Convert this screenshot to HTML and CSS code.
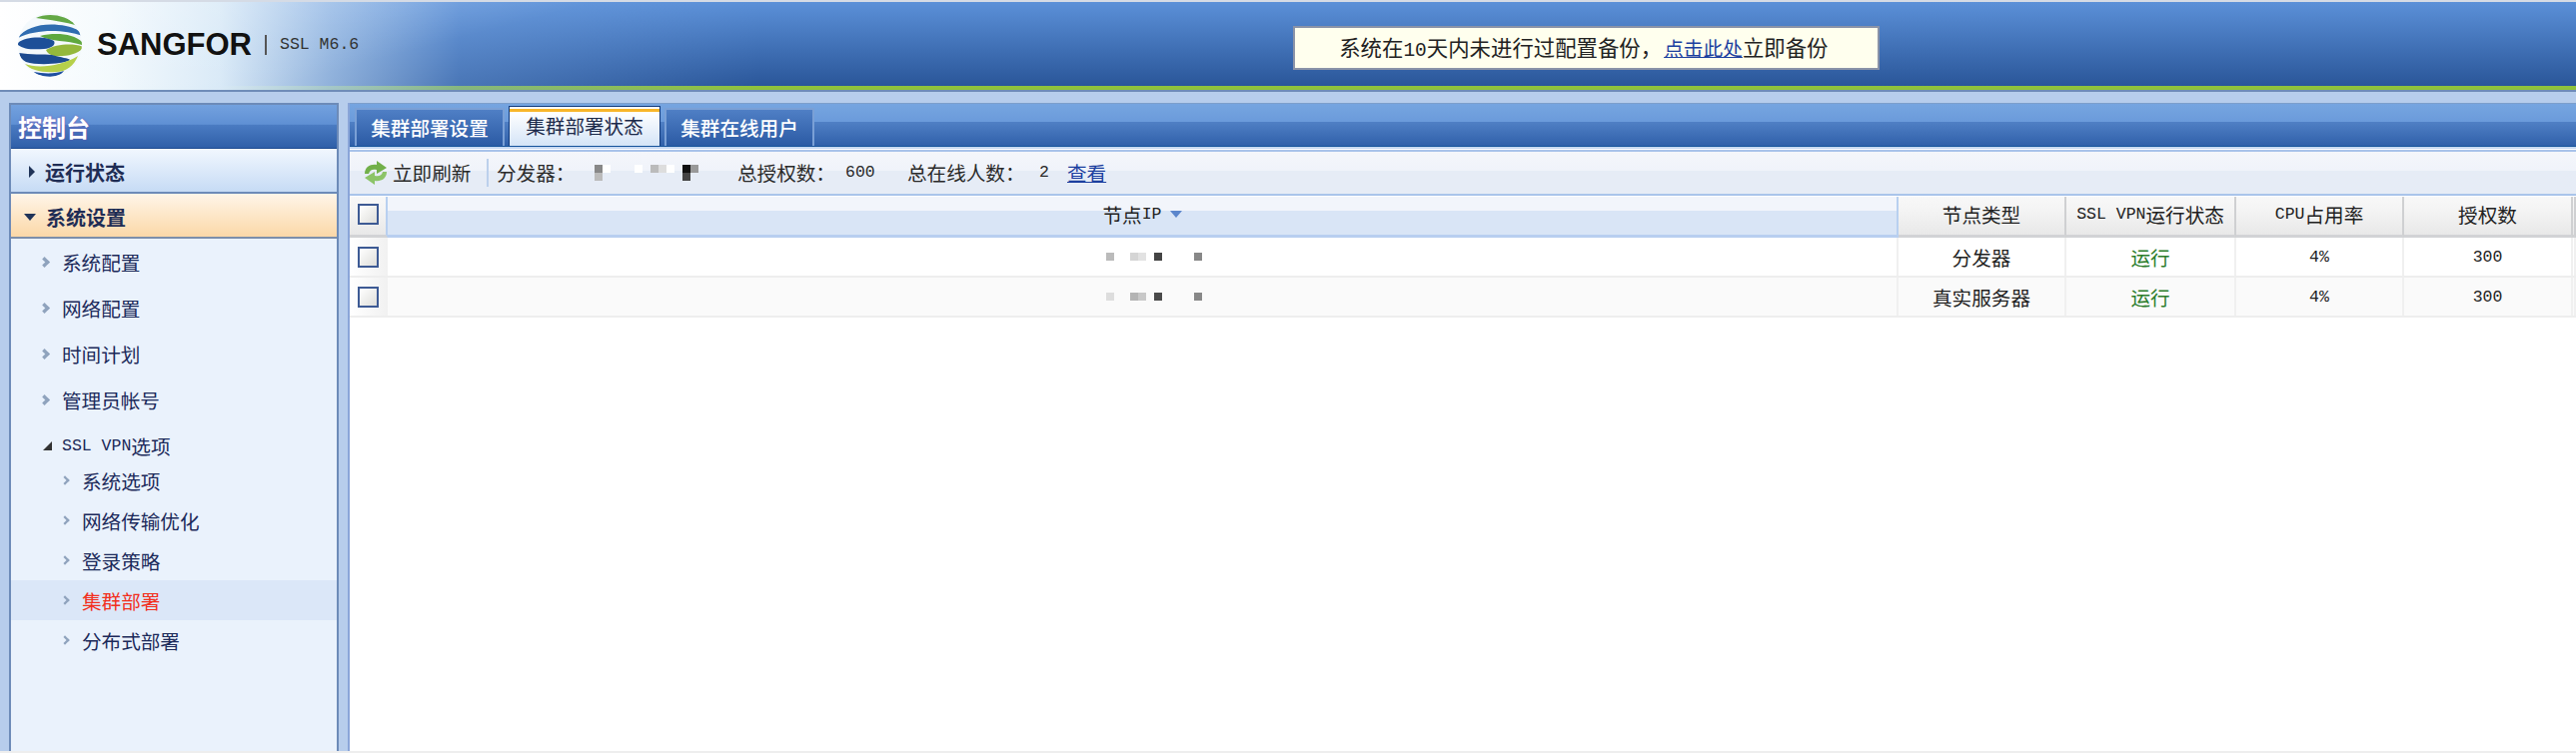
FILE: index.html
```html
<!DOCTYPE html>
<html lang="zh-CN">
<head>
<meta charset="utf-8">
<title>SANGFOR SSL M6.6</title>
<link rel="stylesheet" href="styles.css">
</head>
<body>
<div class="page">
  <header class="top">
    <div class="brand">
      <svg class="logo" width="70" height="66" viewBox="0 0 70 66">
        <defs><clipPath id="globe"><circle cx="34" cy="33" r="32"/></clipPath></defs>
        <g clip-path="url(#globe)">
          <rect width="70" height="66" fill="#f4f9fc"/>
          <path d="M20 6C30 1 48 1 62 14C50 10 34 8 20 6Z" fill="#63a845"/>
          <path d="M2 26C10 14 30 10 50 14C60 16 64 19 67 24C50 18 22 16 2 26Z" fill="#2f6cb0"/>
          <path d="M24 24C40 20 58 22 66 30L66 33C50 28 36 30 24 24Z" fill="#5fa83e"/>
          <path d="M1 32C8 24 30 24 38 29C40 33 36 36 28 37C16 38 6 37 1 32Z" fill="#1d4f98"/>
          <path d="M30 38C40 32 58 31 67 35C64 42 50 45 38 44C34 43 31 41 30 38Z" fill="#94b83c"/>
          <path d="M3 41C14 43 28 42 36 43C46 46 52 46 54 48C48 52 22 54 10 50C6 48 4 45 3 41Z" fill="#1c4a90"/>
          <path d="M9 52C22 57 46 54 62 44C58 54 50 60 40 60C26 61 14 58 9 52Z" fill="#b6d04a"/>
          <path d="M18 60C28 62 40 62 48 59C44 66 24 67 18 60Z" fill="#1f4fa0"/>
        </g>
      </svg>
      <span class="brand-name">SANGFOR</span>
      <span class="brand-ver">SSL M6.6</span>
    </div>
    <div class="notice">系统在<span class="en">10</span>天内未进行过配置备份，<a class="notice-link" href="#">点击此处</a><span class="notice-end">立即备份</span></div>
  </header>

  <div class="body">
    <aside class="side">
      <h1 class="side-title">控制台</h1>
      <div class="side-group"><span class="arrow-right"></span>运行状态</div>
      <div class="side-group open"><span class="arrow-down"></span>系统设置</div>
      <ul class="menu">
        <li class="menu-item"><span class="chev"></span>系统配置</li>
        <li class="menu-item"><span class="chev"></span>网络配置</li>
        <li class="menu-item"><span class="chev"></span>时间计划</li>
        <li class="menu-item"><span class="chev"></span>管理员帐号</li>
        <li class="menu-folder"><span class="corner"></span><span class="en">SSL VPN</span>选项</li>
        <li class="menu-sub"><span class="chev small"></span>系统选项</li>
        <li class="menu-sub"><span class="chev small"></span>网络传输优化</li>
        <li class="menu-sub"><span class="chev small"></span>登录策略</li>
        <li class="menu-sub active"><span class="chev small"></span>集群部署</li>
        <li class="menu-sub"><span class="chev small"></span>分布式部署</li>
      </ul>
    </aside>

    <main class="main">
      <nav class="tabs">
        <a class="tab">集群部署设置</a>
        <a class="tab current">集群部署状态</a>
        <a class="tab">集群在线用户</a>
      </nav>
      <div class="toolbar">
        <svg class="refresh" width="24" height="26" viewBox="0 0 24 26">
          <path d="M1 14C1 7 7 4 13 5L13 1L23 8L13 14L13 10C9 9 6 10 5 14Z" fill="#72b04a"/>
          <path d="M23 12C23 19 17 22 11 21L11 25L1 18L11 12L11 16C15 17 18 16 19 12Z" fill="#8cc468"/>
        </svg>
        <span class="tool-refresh">立即刷新</span>
        <span class="tool-sep"></span>
        <span class="tool-dispatch">分发器：</span>
        <svg class="mosaic-top" width="104" height="16" viewBox="0 0 104 16">
          <rect x="0" y="0" width="8" height="8" fill="#888"/><rect x="0" y="8" width="8" height="8" fill="#bbb"/>
          <rect x="8" y="0" width="8" height="8" fill="#fff"/><rect x="40" y="0" width="8" height="8" fill="#fff"/>
          <rect x="56" y="0" width="8" height="8" fill="#bbb"/><rect x="64" y="0" width="8" height="8" fill="#ddd"/>
          <rect x="72" y="0" width="8" height="8" fill="#fff"/><rect x="88" y="0" width="8" height="8" fill="#111"/>
          <rect x="88" y="8" width="8" height="8" fill="#444"/><rect x="96" y="0" width="8" height="8" fill="#999"/>
        </svg>
        <span class="tool-total">总授权数：</span>
        <span class="en tool-total-val">600</span>
        <span class="tool-online">总在线人数：</span>
        <span class="en tool-online-val">2</span>
        <a class="tool-link" href="#">查看</a>
      </div>
      <div class="grid">
        <div class="row head">
          <div class="cell check"><span class="box"></span></div>
          <div class="cell ip sorted">节点<span class="en">IP</span><span class="sort"></span></div>
          <div class="cell">节点类型</div>
          <div class="cell"><span class="en">SSL VPN</span>运行状态</div>
          <div class="cell"><span class="en">CPU</span>占用率</div>
          <div class="cell">授权数</div>
          <div class="cell"></div>
        </div>
        <div class="row">
          <div class="cell check"><span class="box"></span></div>
          <div class="cell ip">
            <svg class="mask" width="96" height="8" viewBox="0 0 96 8"><rect x="0" width="8" height="8" fill="#bbb"/><rect x="24" width="8" height="8" fill="#d5d5d5"/><rect x="32" width="8" height="8" fill="#e2e2e2"/><rect x="48" width="8" height="8" fill="#444"/><rect x="88" width="8" height="8" fill="#888"/></svg>
          </div>
          <div class="cell">分发器</div>
          <div class="cell run">运行</div>
          <div class="cell en-cell">4%</div>
          <div class="cell en-cell">300</div>
          <div class="cell"></div>
        </div>
        <div class="row alt">
          <div class="cell check"><span class="box"></span></div>
          <div class="cell ip">
            <svg class="mask" width="96" height="8" viewBox="0 0 96 8"><rect x="0" width="8" height="8" fill="#ddd"/><rect x="24" width="8" height="8" fill="#b4b4b4"/><rect x="32" width="8" height="8" fill="#c8c8c8"/><rect x="48" width="8" height="8" fill="#4a4a4a"/><rect x="88" width="8" height="8" fill="#888"/></svg>
          </div>
          <div class="cell">真实服务器</div>
          <div class="cell run">运行</div>
          <div class="cell en-cell">4%</div>
          <div class="cell en-cell">300</div>
          <div class="cell"></div>
        </div>
      </div>
    </main>
  </div>
</div>
</body>
</html>
```
FILE: styles.css
```css
* { box-sizing: border-box; }
html, body { margin: 0; height: 100%; }
body {
  font-family: "Noto Sans CJK SC", "Liberation Sans", sans-serif;
  font-size: 19.6px;
  color: #222;
  background: #eeeeee;
  overflow: hidden;
}
a { text-decoration: none; }
.en { font-family: "Liberation Mono", monospace; font-size: 16.5px; }

.page { height: 752px; display: flex; flex-direction: column; background: #b7cdec; }

/* top banner */
.top {
  height: 92px;
  flex: none;
  display: flex;
  align-items: flex-start;
  border-top: 2px solid #d5dbe5;
  border-bottom: 2px solid #6f8cb8;
  background:
    linear-gradient(180deg, transparent 0, transparent 84px, #8fc23c 84px, #8fc23c 88px),
    linear-gradient(180deg, #5b90d8 0, #2a5699 84px);
  position: relative;
}
.top::before {
  content: "";
  position: absolute;
  inset: 0 auto 0 0;
  width: 760px;
  background:
    linear-gradient(165deg, rgba(255,255,255,.3) 0, rgba(255,255,255,0) 55%),
    linear-gradient(90deg, #fff 0, #f2f9fd 110px, #d8e9f7 220px, rgba(170,200,235,.8) 330px, rgba(120,165,225,.4) 460px, rgba(90,140,215,0) 760px);
}
.brand { position: relative; display: flex; align-items: center; height: 86px; padding-left: 16px; }
.logo { flex: none; margin-top: 0; }
.brand-name {
  font-family: "Liberation Sans", sans-serif;
  font-weight: 700;
  font-size: 31px;
  color: #111;
  margin-left: 11px;
  width: 168px;
}
.brand-ver {
  font-family: "Liberation Mono", monospace;
  font-size: 16.5px;
  color: #333;
  border-left: 2px solid #555;
  padding-left: 13px;
  line-height: 20px;
}
.notice {
  position: relative;
  margin-left: 935px;
  margin-top: 24px;
  width: 587px;
  height: 44px;
  border: 2px solid #8a93a8;
  background: #ffffee;
  color: #222;
  font-size: 21.4px;
  line-height: 38px;
  padding-left: 44px;
  white-space: nowrap;
}
.notice .en { font-size: 19.5px; }
.notice-link { color: #1c3f9f; text-decoration: underline; font-size: 19.7px; margin-left: 2px; }
.notice-end { font-size: 21.4px; }

/* body */
.body { flex: 1; display: flex; padding: 11px 0 0 9px; min-height: 0; }

/* sidebar */
.side {
  width: 330px;
  flex: none;
  border-left: 2px solid #6d8bb8;
  border-right: 2px solid #6d8bb8;
  background: #eaf2fc;
}
.side-title {
  margin: 0;
  height: 46px;
  font-size: 24px;
  font-weight: 700;
  line-height: 44px;
  padding-left: 7px;
  color: #fff;
  text-shadow: 0 0 2px #7a4fb0;
  border-top: 2px solid #6d8bb8;
  border-bottom: 1px solid #1c4a90;
  background: linear-gradient(180deg, #73a1de 0, #5f90d4 45%, #4a7bc2 47%, #2f5fa8 100%);
}
.side-group {
  height: 45px;
  display: flex;
  align-items: center;
  padding-top: 3px;
  font-weight: 700;
  font-size: 20px;
  color: #1f2d55;
  border-bottom: 2px solid #6d8bb8;
  background: linear-gradient(180deg, #f1f7fe 0, #c6dbf5 100%);
}
.side-group.open { background: linear-gradient(180deg, #fff5e8 0, #fbd8a8 100%); border-bottom-color: #7d8faa; }
.arrow-right {
  width: 0; height: 0;
  margin: 0 10px 0 18px;
  border-left: 6px solid #1f3358;
  border-top: 6px solid transparent;
  border-bottom: 6px solid transparent;
}
.arrow-down {
  width: 0; height: 0;
  margin: 0 10px 0 13px;
  border-top: 7px solid #1f3358;
  border-left: 6px solid transparent;
  border-right: 6px solid transparent;
}
.menu { list-style: none; margin: 0; padding: 0; color: #1c2a5a; }
.menu-item { height: 46px; display: flex; align-items: center; padding-left: 30px; }
.menu-folder { height: 38px; padding: 8px 0 0 32px; display: flex; align-items: center; }
.menu-sub { height: 40px; display: flex; align-items: center; padding-left: 51px; }
.menu-sub.active { color: #f2301e; background: #dbe7f8; }
.chev {
  width: 7px; height: 7px;
  flex: none;
  margin-right: 14px;
  border-top: 3px solid #8fa3bd;
  border-right: 3px solid #8fa3bd;
  transform: rotate(45deg) scale(1.1);
}
.chev.small { width: 6px; height: 6px; border-width: 2px; margin-right: 14px; }
.corner {
  width: 0; height: 0;
  flex: none;
  margin-right: 10px;
  border-bottom: 9px solid #333;
  border-left: 9px solid transparent;
}

/* main panel */
.main {
  flex: 1;
  min-width: 0;
  margin-left: 9px;
  border-left: 2px solid #8aa5d8;
  background: #fff;
  display: flex;
  flex-direction: column;
}
.tabs {
  height: 44px;
  flex: none;
  display: flex;
  align-items: flex-end;
  gap: 4px;
  padding-left: 5px;
  border-top: 1px solid #7d9fcc;
  border-bottom: 1px solid #15539b;
  background: linear-gradient(180deg, #76a5e0 0, #6b9bdb 42%, #4f7fc4 44%, #3060aa 100%);
}
.tab {
  width: 150px;
  height: 38px;
  text-align: center;
  line-height: 36px;
  font-weight: 500;
  color: #fff;
  border: 2px solid #7aa0d6;
  border-bottom: 0;
  background: linear-gradient(180deg, #4f7fc5 0, #2b5aa4 100%);
}
.tab.current {
  height: 40px;
  width: 152px;
  font-weight: 400;
  color: #1c2a4a;
  border: 1px solid #123a7c;
  border-bottom: 0;
  padding-top: 1px;
  background: linear-gradient(180deg, #fff 0, #fff 2px, #f8b62a 2px, #f8b62a 5px, #fff 5px, #d4e4f7 100%);
}
.toolbar {
  height: 49px;
  flex: none;
  display: flex;
  align-items: center;
  padding: 4px 0 0 14px;
  white-space: nowrap;
  color: #2a2a2a;
  border-bottom: 2px solid #a9c4ea;
  background:
    linear-gradient(180deg, #c6d8f2 0, #c6d8f2 2px, #fff 2px, #fff 3px, #a9c3ea 3px, #a9c3ea 5px, transparent 5px),
    linear-gradient(180deg, #f5f7fb 0, #f0f3fa 50%, #e6ecf6 52%, #e6ecf6 100%);
}
.refresh { flex: none; margin-right: 5px; }
.tool-refresh { width: 94px; }
.tool-sep { width: 2px; height: 28px; background: #bcd0ec; }
.tool-dispatch { margin-left: 8px; width: 98px; }
.mosaic-top { flex: none; width: 104px; margin-right: 39px; }
.tool-total { width: 108px; }
.tool-total-val { width: 62px; }
.tool-online { width: 132px; }
.tool-online-val { width: 28px; }
.tool-link { color: #1c3f9f; text-decoration: underline; }

/* table */
.grid { margin-top: 1px; }
.row {
  display: grid;
  grid-template-columns: 38px 1512px 168px 170px 168px 169px 3px;
  height: 40px;
  border-bottom: 2px solid #eeeeee;
}
.row.alt { background: #fafafa; }
.row.head { height: 41px; border-bottom: 0; }
.cell {
  display: flex;
  align-items: center;
  justify-content: center;
  border-right: 2px solid #f0f0f0;
  white-space: nowrap;
  color: #222;
}
.en-cell { font-family: "Liberation Mono", monospace; font-size: 16.5px; }
.run { color: #2c7d2c; }
.check { background: linear-gradient(90deg, #fff 0, #f1f1f1 100%); border-right: 0; }
.row:not(.head) .check { padding-right: 2px; }
.box {
  width: 21px;
  height: 21px;
  border: 2px solid #3d5a94;
  background: linear-gradient(135deg, #fff 0, #dededa 100%);
}
.mask { margin-left: 24px; }
.head .cell {
  padding-bottom: 3px;
  background: linear-gradient(180deg, #f8f8f8 0, #f4f4f4 35%, #e8e8e8 100%);
  border-right: 2px solid #cfd0d2;
  border-bottom: 3px solid #d2d3d5;
}
.head .check { border-right: 2px solid #b8d0f0; }
.head .ip {
  background: linear-gradient(180deg, #f2f5fb 0, #f2f5fb 36%, #d9e5f6 38%, #d9e5f6 100%);
  border-right: 2px solid #b8d0f0;
  border-bottom: 3px solid #b8cff0;
}
.sort {
  width: 0; height: 0;
  margin-left: 8px;
  border-top: 7px solid #5b86cc;
  border-left: 6px solid transparent;
  border-right: 6px solid transparent;
}
```
